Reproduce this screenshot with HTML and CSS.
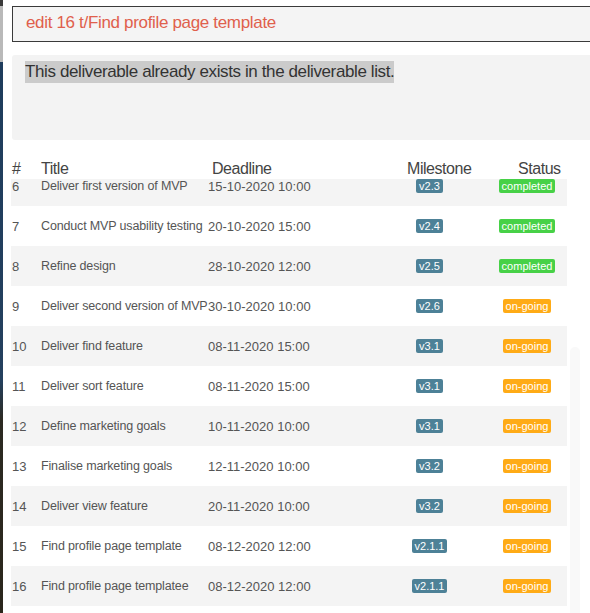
FILE: index.html
```html
<!DOCTYPE html>
<html lang="en">
<head>
<meta charset="utf-8">
<title>Deliverables</title>
<link rel="stylesheet" href="styles.css">
</head>
<body>
<div class="edge"></div>
<div class="app">
  <div class="command">edit 16 t/Find profile page template</div>
  <div class="result"><span class="result-text">This deliverable already exists in the deliverable list.</span></div>
  <div class="head">
    <span>#</span><span>Title</span><span>Deadline</span><span>Milestone</span><span>Status</span>
  </div>
  <div class="list">
    <div class="rows">
      <div class="row alt"><span>6</span><span class="title">Deliver first version of MVP</span><span>15-10-2020 10:00</span><span class="mcell"><b class="ms">v2.3</b></span><span class="scell"><b class="st done">completed</b></span></div>
      <div class="row"><span>7</span><span class="title">Conduct MVP usability testing</span><span>20-10-2020 15:00</span><span class="mcell"><b class="ms">v2.4</b></span><span class="scell"><b class="st done">completed</b></span></div>
      <div class="row alt"><span>8</span><span class="title">Refine design</span><span>28-10-2020 12:00</span><span class="mcell"><b class="ms">v2.5</b></span><span class="scell"><b class="st done">completed</b></span></div>
      <div class="row"><span>9</span><span class="title">Deliver second version of MVP</span><span>30-10-2020 10:00</span><span class="mcell"><b class="ms">v2.6</b></span><span class="scell"><b class="st going">on-going</b></span></div>
      <div class="row alt"><span>10</span><span class="title">Deliver find feature</span><span>08-11-2020 15:00</span><span class="mcell"><b class="ms">v3.1</b></span><span class="scell"><b class="st going">on-going</b></span></div>
      <div class="row"><span>11</span><span class="title">Deliver sort feature</span><span>08-11-2020 15:00</span><span class="mcell"><b class="ms">v3.1</b></span><span class="scell"><b class="st going">on-going</b></span></div>
      <div class="row alt"><span>12</span><span class="title">Define marketing goals</span><span>10-11-2020 10:00</span><span class="mcell"><b class="ms">v3.1</b></span><span class="scell"><b class="st going">on-going</b></span></div>
      <div class="row"><span>13</span><span class="title">Finalise marketing goals</span><span>12-11-2020 10:00</span><span class="mcell"><b class="ms">v3.2</b></span><span class="scell"><b class="st going">on-going</b></span></div>
      <div class="row alt"><span>14</span><span class="title">Deliver view feature</span><span>20-11-2020 10:00</span><span class="mcell"><b class="ms">v3.2</b></span><span class="scell"><b class="st going">on-going</b></span></div>
      <div class="row"><span>15</span><span class="title">Find profile page template</span><span>08-12-2020 12:00</span><span class="mcell"><b class="ms">v2.1.1</b></span><span class="scell"><b class="st going">on-going</b></span></div>
      <div class="row alt"><span>16</span><span class="title">Find profile page templatee</span><span>08-12-2020 12:00</span><span class="mcell"><b class="ms">v2.1.1</b></span><span class="scell"><b class="st going">on-going</b></span></div>
    </div>
    <div class="scroll"><div class="thumb"></div></div>
  </div>
</div>
</body>
</html>
```

FILE: styles.css
```css
html, body {
  margin: 0;
  padding: 0;
  height: 613px;
  overflow: hidden;
  background: #ffffff;
}
body {
  display: flex;
  font-family: "Liberation Sans", Arial, sans-serif;
}
.edge {
  flex: 0 0 3px;
  background: linear-gradient(#3a3a3a 0, #3a3a3a 6px, #b9b9b9 6px, #b9b9b9 62px, #1e3c5c 62px, #24405e 380px, #2c2a22 420px, #2a261c 613px);
}
.app {
  flex: 1;
  display: flex;
  flex-direction: column;
  padding-left: 9px;
  margin-right: -12px;
  min-width: 0;
}
.command {
  margin-top: 6px;
  height: 34px;
  border: 1px solid #3a3a3a;
  background: #f4f4f4;
  padding-left: 13px;
  font-size: 17px;
  letter-spacing: -0.33px;
  line-height: 32px;
  color: #e0604c;
}
.result {
  margin-top: 13px;
  height: 79px;
  background: #f3f3f3;
  border-radius: 3px 0 0 3px;
  padding: 6px 0 0 13px;
}
.result-text {
  background: #cbcbcb;
  color: #333333;
  font-size: 17px;
  letter-spacing: -0.39px;
  line-height: 22px;
  display: inline-block;
}
.head {
  margin-top: 15px;
  height: 21px;
  padding-top: 3px;
  display: grid;
  grid-template-columns: 29px 171px 195px 111px auto;
  font-size: 16px;
  letter-spacing: -0.45px;
  line-height: 22px;
  color: #444444;
}
.list {
  flex: 1;
  overflow: hidden;
  margin-left: -1px;
  display: flex;
  gap: 3px;
}
.rows {
  margin-top: -13px;
  flex: 0 0 556px;
}
.row {
  height: 40px;
  display: grid;
  grid-template-columns: 29px 167px 155px 133px 62px;
  align-items: center;
  padding-left: 1px;
  font-size: 13px;
  color: #555555;
  white-space: nowrap;
}
.row .title {
  font-size: 12.5px;
  letter-spacing: -0.15px;
}
.row.alt {
  background: #f4f4f4;
}
.mcell, .scell {
  display: flex;
  justify-content: center;
}
.ms, .st {
  font-weight: normal;
  font-size: 11px;
  line-height: 14px;
  height: 14px;
  color: #ffffff;
  border-radius: 2px;
  padding: 0 3px;
}
.ms {
  background: #4d8197;
}
.done {
  background: #47d147;
}
.going {
  background: #ffab16;
}
.scroll {
  flex: 0 0 10px;
  padding-top: 168px;
}
.thumb {
  height: 300px;
  background: #f9f9f9;
  border-radius: 5px;
}
```
